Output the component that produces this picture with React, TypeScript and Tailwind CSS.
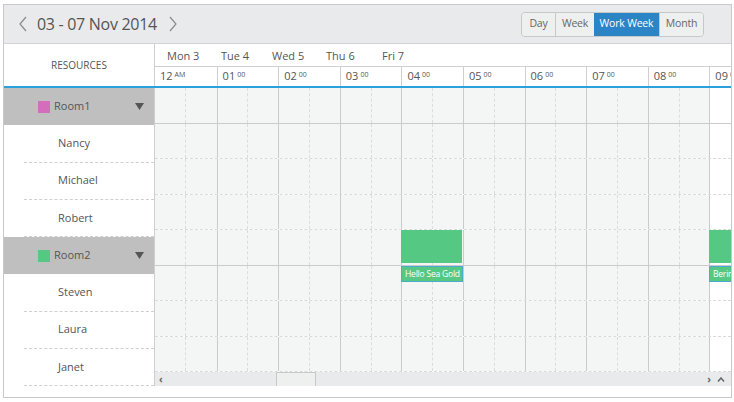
const HOURS = ["12", "01", "02", "03", "04", "05", "06", "07", "08", "09"];
const DAYS = [
  { label: "Mon 3", x: 12 },
  { label: "Tue 4", x: 66 },
  { label: "Wed 5", x: 117 },
  { label: "Thu 6", x: 171 },
  { label: "Fri 7", x: 227 },
];

type Row = { name: string; room?: boolean; color?: string };

const ROWS: Row[] = [
  { name: "Room1", room: true, color: "#d56dbd" },
  { name: "Nancy" },
  { name: "Michael" },
  { name: "Robert" },
  { name: "Room2", room: true, color: "#55c883" },
  { name: "Steven" },
  { name: "Laura" },
  { name: "Janet" },
];

const COL_W = 61.6;

function Chevron({ dir }: { dir: "left" | "right" }) {
  return (
    <svg width="10" height="16" viewBox="0 0 10 16" className="text-[#8a8a8a]">
      <polyline
        points={dir === "left" ? "8,1 2,8 8,15" : "2,1 8,8 2,15"}
        fill="none"
        stroke="currentColor"
        strokeWidth="1.2"
      />
    </svg>
  );
}

function Toolbar() {
  return (
    <div className="flex h-[39px] shrink-0 items-center border-b border-[#d2d3d4] bg-[#e9eaeb] pl-[14px] pr-[27px]">
      <Chevron dir="left" />
      <span className="ml-[9px] mr-[11px] text-[16px] tracking-[-0.3px] text-[#555]">03 - 07 Nov 2014</span>
      <Chevron dir="right" />
      <div className="ml-auto flex h-[25px] overflow-hidden rounded-[4px] border border-[#c6c7c8] text-[10.5px] tracking-[-0.2px] text-[#666]">
        <div className="flex w-[33px] items-center justify-center bg-[#eeefef]">Day</div>
        <div className="flex w-[39px] items-center justify-center border-l border-[#c6c7c8] bg-[#eeefef]">Week</div>
        <div className="flex w-[65px] items-center justify-center bg-[#2b84c6] text-white">Work Week</div>
        <div className="flex w-[44px] items-center justify-center border-l border-[#c6c7c8] bg-[#eeefef]">Month</div>
      </div>
    </div>
  );
}

function Header() {
  return (
    <div className="flex h-[44px] shrink-0 border-b-2 border-[#2aa0dd]">
      <div className="flex w-[151px] shrink-0 items-center justify-center border-r border-[#cfcfcf] text-[10px] text-[#555]">
        RESOURCES
      </div>
      <div className="flex min-w-0 flex-1 flex-col overflow-hidden">
        <div className="relative h-[23px] border-b border-[#cfcfcf] text-[11px] text-[#555]">
          {DAYS.map((d) => (
            <span key={d.label} className="absolute top-[4px]" style={{ left: d.x }}>
              {d.label}
            </span>
          ))}
        </div>
        <div className="flex flex-1">
          {HOURS.map((h, i) => (
            <div
              key={h}
              className={`shrink-0 pl-[5px] pt-[1px] text-[11px] text-[#555] ${i > 0 ? "border-l border-[#cfcfcf]" : ""}`}
              style={{ width: COL_W }}
            >
              {h}
              <sup className="ml-[2px] text-[7px]">{i === 0 ? "AM" : "00"}</sup>
            </div>
          ))}
        </div>
      </div>
    </div>
  );
}

function ResourceColumn() {
  return (
    <div className="flex w-[151px] shrink-0 flex-col border-r border-[#cfcfcf]">
      {ROWS.map((r) =>
        r.room ? (
          <div key={r.name} className="flex h-[37.25px] items-center bg-[#bfbfbf] pl-[34px] pr-[10px] text-[11px] text-[#555]">
            <span className="mr-[4px] h-[12px] w-[12px]" style={{ background: r.color }} />
            {r.name}
            <svg width="9" height="7" viewBox="0 0 9 7" className="ml-auto">
              <polygon points="0,0 9,0 4.5,7" fill="#555" />
            </svg>
          </div>
        ) : (
          <div key={r.name} className="ml-[20px] flex h-[37.25px] items-center border-b border-dashed border-[#cfcfcf] pl-[34px] text-[11px] text-[#555]">
            {r.name}
          </div>
        )
      )}
    </div>
  );
}

function Grid() {
  return (
    <div className="flex min-w-0 flex-1 flex-col">
      <div className="relative flex h-[284px] flex-col overflow-hidden">
        {ROWS.map((r) => (
          <div
            key={r.name}
            className={`flex h-[35.5px] shrink-0 border-b ${r.room ? "border-solid border-[#cbcbcb]" : "border-dashed border-[#dadada]"}`}
          >
            {HOURS.map((h, i) => (
              <div
                key={h}
                className={`flex shrink-0 ${i > 0 ? "border-l border-[#cbcbcb]" : ""} ${i === 9 ? "bg-white" : "bg-[#f4f5f5]"}`}
                style={{ width: COL_W }}
              >
                <div className="h-full flex-1 border-r border-dashed border-[#dcdcdc]" />
                <div className="h-full flex-1" />
              </div>
            ))}
          </div>
        ))}
        <div className="absolute left-[246px] top-[142px] h-[33px] w-[61px] bg-[#55c883]" />
        <div className="absolute left-[246px] top-[178px] flex h-[16px] w-[62px] items-center overflow-hidden whitespace-nowrap border border-[#4fa9c9] bg-[#55c883] pl-[3px] text-[8.5px] tracking-[-0.2px] text-white">
          Hello Sea Gold
        </div>
        <div className="absolute left-[554px] top-[142px] h-[33px] w-[30px] bg-[#55c883]" />
        <div className="absolute left-[554px] top-[178px] flex h-[16px] w-[30px] items-center overflow-hidden whitespace-nowrap border border-[#4fa9c9] bg-[#55c883] pl-[3px] text-[8.5px] tracking-[-0.2px] text-white">
          Bering
        </div>
      </div>
      <div className="relative flex h-[14px] items-center bg-[#e9eaeb] text-[#666]">
        <span className="ml-[4px] text-[10px] font-bold leading-none">‹</span>
        <div className="absolute left-[121px] top-0 h-[14px] w-[40px] border border-b-0 border-[#c8c8c8] bg-[#eeefef]" />
        <span className="ml-auto mr-[6px] text-[10px] font-bold leading-none">›</span>
        <svg width="8" height="5" viewBox="0 0 8 5" className="mr-[6px]">
          <polyline points="1,4.5 4,1 7,4.5" fill="none" stroke="#666" strokeWidth="1.5" />
        </svg>
      </div>
    </div>
  );
}

export default function App() {
  return (
    <div className="h-[402px] w-[734px] bg-white pl-[3px] pt-[4px]" style={{ fontFamily: '"Open Sans", "Noto Sans", sans-serif' }}>
      <div className="flex h-[394px] w-[729px] flex-col overflow-hidden border border-[#c9c9c9]">
        <Toolbar />
        <Header />
        <div className="flex">
          <ResourceColumn />
          <Grid />
        </div>
      </div>
    </div>
  );
}
